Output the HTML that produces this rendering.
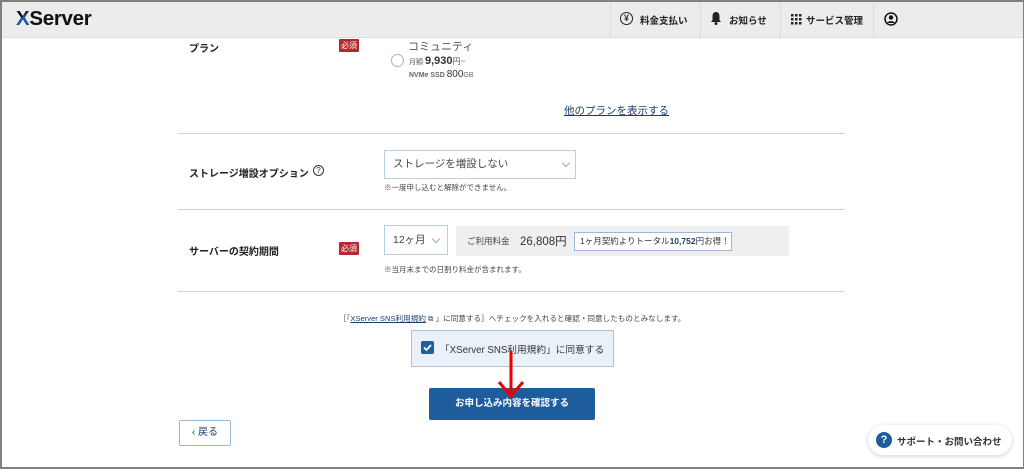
<!DOCTYPE html>
<html><head><meta charset="utf-8"><style>
*{margin:0;padding:0;box-sizing:border-box}
body{width:1024px;height:469px;overflow:hidden;background:#fff;font-family:"Liberation Sans","Noto Sans CJK JP",sans-serif;color:#333;position:relative}
.frame{position:absolute;left:0;top:0;width:1024px;height:469px;border:2px solid #808080;border-right-width:1px;pointer-events:none;z-index:10}
.abs{position:absolute;white-space:nowrap}
.hdr{position:absolute;left:0;top:0;width:1024px;height:38px;background:#ececec;border-bottom:1px solid #ddd}
.sep{position:absolute;top:0;width:1px;height:38px;background:#dcdcdc}
.hi{position:absolute;top:13px;font-size:9.5px;font-weight:bold;color:#222}
.badge{position:absolute;width:20px;height:13px;background:#b3292e;color:#fff;font-size:8px;text-align:center;line-height:13px;border-radius:1px}
.hr{position:absolute;left:178px;width:667px;height:1px;background:#c9d6dc}
.lbl{position:absolute;font-size:10px;font-weight:bold;color:#222}
.sel{position:absolute;border:1px solid #b9d0e0;background:#fff;font-size:10.5px;color:#444;padding-left:8px}
.chev{position:absolute;width:6px;height:6px;border-right:1px solid #9ab;border-bottom:1px solid #9ab;transform:rotate(45deg)}
.note{position:absolute;font-size:7.5px;color:#444}
</style></head><body>
<div class="hdr">
  <div class="abs" style="left:16px;top:7px;font-size:20.5px;font-weight:bold;color:#111;letter-spacing:-0.3px"><span style="color:#111;background:linear-gradient(135deg,#111 45%,#1a56a8 46%);-webkit-background-clip:text;background-clip:text;-webkit-text-fill-color:transparent">X</span>Server</div>
  <div class="sep" style="left:610px"></div>
  <div class="sep" style="left:700px"></div>
  <div class="sep" style="left:780px"></div>
  <div class="sep" style="left:873px"></div>
  <div class="abs" style="left:620px;top:12px;width:13px;height:13px;border:1.5px solid #222;border-radius:50%;font-size:9px;font-weight:bold;text-align:center;line-height:10px">¥</div>
  <div class="hi" style="left:640px">料金支払い</div>
  <svg class="abs" style="left:710px;top:11px" width="12" height="15" viewBox="0 0 12 15"><path d="M6 1C3.5 1 2.5 3 2.5 5.5V9L1 11h10L9.5 9V5.5C9.5 3 8.5 1 6 1z" fill="#222"/><circle cx="6" cy="12.5" r="1.5" fill="#222"/></svg>
  <div class="hi" style="left:729px">お知らせ</div>
  <svg class="abs" style="left:791px;top:14px" width="11" height="11" viewBox="0 0 11 11" fill="#222"><rect x="0" y="0" width="2.5" height="2.5"/><rect x="4" y="0" width="2.5" height="2.5"/><rect x="8" y="0" width="2.5" height="2.5"/><rect x="0" y="4" width="2.5" height="2.5"/><rect x="4" y="4" width="2.5" height="2.5"/><rect x="8" y="4" width="2.5" height="2.5"/><rect x="0" y="8" width="2.5" height="2.5"/><rect x="4" y="8" width="2.5" height="2.5"/><rect x="8" y="8" width="2.5" height="2.5"/></svg>
  <div class="hi" style="left:806px">サービス管理</div>
  <svg class="abs" style="left:884px;top:12px" width="14" height="14" viewBox="0 0 14 14"><circle cx="7" cy="7" r="6" fill="none" stroke="#111" stroke-width="1.5"/><circle cx="7" cy="5.5" r="2.2" fill="#111"/><path d="M3 11c1-2.5 7-2.5 8 0z" fill="#111"/></svg>
</div>

<div class="lbl" style="left:189px;top:40px">プラン</div>
<div class="badge" style="left:339px;top:39px">必須</div>
<div class="abs" style="left:408px;top:38px;font-size:11px;color:#555">コミュニティ</div>
<div class="abs" style="left:391px;top:54px;width:13px;height:13px;border:1px solid #9bb8d6;border-radius:50%"></div>
<div class="abs" style="left:409px;top:55px;font-size:7px;color:#555">月額 <span style="font-size:11px;font-weight:bold;color:#333">9,930</span><span style="font-size:8px">円~</span></div>
<div class="abs" style="left:409px;top:69px;font-size:7px;color:#666;font-weight:bold">NVMe SSD <span style="font-size:10px;color:#333;font-weight:normal">800</span><span style="font-size:7px;font-weight:normal">GB</span></div>
<div class="abs" style="left:564px;top:103px;font-size:10.5px;color:#1d3f6b;text-decoration:underline">他のプランを表示する</div>
<div class="hr" style="top:133px"></div>

<div class="lbl" style="left:189px;top:165px">ストレージ増設オプション</div>
<div class="abs" style="left:313px;top:165px;width:11px;height:11px;border:1px solid #333;border-radius:50%;font-size:8px;text-align:center;line-height:10px">?</div>
<div class="sel" style="left:384px;top:150px;width:192px;height:29px;line-height:27px">ストレージを増設しない</div>
<div class="chev" style="left:563px;top:160px"></div>
<div class="note" style="left:384px;top:182px">※一度申し込むと解除ができません。</div>
<div class="hr" style="top:209px"></div>

<div class="lbl" style="left:189px;top:243px">サーバーの契約期間</div>
<div class="badge" style="left:339px;top:242px">必須</div>
<div class="sel" style="left:384px;top:225px;width:64px;height:30px;line-height:28px">12ヶ月</div>
<div class="chev" style="left:433px;top:236px"></div>
<div class="abs" style="left:456px;top:226px;width:333px;height:30px;background:#efefef"></div>
<div class="abs" style="left:467px;top:235px;font-size:8.5px;color:#444">ご利用料金</div>
<div class="abs" style="left:520px;top:233px;font-size:11.5px;color:#333">26,808円</div>
<div class="abs" style="left:574px;top:232px;width:158px;height:19px;background:#fff;border:1px solid #9bb8d6;font-size:8.5px;color:#333;line-height:17px;padding-left:5px">1ヶ月契約よりトータル<b style="color:#1d3f6b">10,752</b>円お得！</div>
<div class="note" style="left:384px;top:264px">※当月末までの日割り料金が含まれます。</div>
<div class="hr" style="top:291px"></div>

<div class="abs" style="left:339px;top:313px;font-size:7.6px;color:#444">［「<span style="color:#1d3f6b;text-decoration:underline">XServer SNS利用規約</span> ⧉ 」に同意する］へチェックを入れると確認・同意したものとみなします。</div>
<div class="abs" style="left:411px;top:330px;width:203px;height:37px;background:#eaf1f9;border:1px solid #a9c3dc"></div>
<div class="abs" style="left:421px;top:341px;width:13px;height:13px;background:#1d5fa0;border-radius:2px"></div>
<svg class="abs" style="left:421px;top:341px" width="13" height="13" viewBox="0 0 13 13"><path d="M3 6.5l2.5 2.5 4.5-5" stroke="#fff" stroke-width="1.8" fill="none"/></svg>
<div class="abs" style="left:440px;top:342px;font-size:9.7px;color:#333">「XServer SNS利用規約」に同意する</div>
<div class="abs" style="left:429px;top:388px;width:166px;height:32px;background:#1d5c9d;border-radius:2px;color:#fff;font-size:9.5px;font-weight:bold;text-align:center;line-height:32px">お申し込み内容を確認する</div>
<svg class="abs" style="left:495px;top:350px" width="32" height="50" viewBox="0 0 32 50"><path d="M16 1V45M4 32L16 46 28 32" stroke="#e00" stroke-width="3" fill="none"/></svg>

<div class="abs" style="left:179px;top:420px;width:52px;height:26px;border:1px solid #9bb8d6;border-radius:2px;font-size:10px;color:#1d3f6b;text-align:center;line-height:24px">‹ 戻る</div>

<div class="abs" style="left:868px;top:425px;width:144px;height:30px;background:#fff;border-radius:15px;box-shadow:0 1px 5px rgba(0,0,0,.2)"></div>
<div class="abs" style="left:876px;top:432px;width:16px;height:16px;border-radius:50%;background:#1d5c9d;color:#fff;font-size:11px;font-weight:bold;text-align:center;line-height:16px">?</div>
<div class="abs" style="left:897px;top:434px;font-size:9.5px;font-weight:bold;color:#333">サポート・お問い合わせ</div>
<div class="frame"></div>
</body></html>
